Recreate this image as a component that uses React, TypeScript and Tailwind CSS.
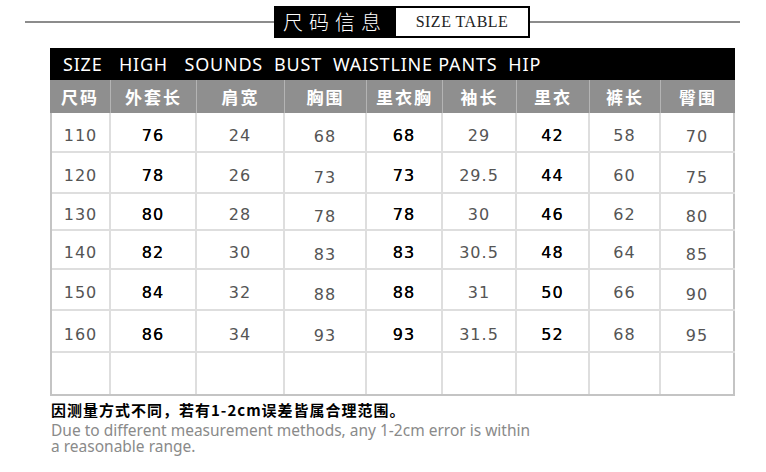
import React from "react";

const cols = [61, 86, 88, 82, 76, 74, 73, 71, 74];
const headers = ["尺码", "外套长", "肩宽", "胸围", "里衣胸", "袖长", "里衣", "裤长", "臀围"];

// true = dark figures, false = grey figures
const darkCols = [false, true, false, false, true, false, true, false, false];
// some columns sit a little lower in the picture
const lowCols = [false, false, false, true, false, false, false, false, true];

const rows = [
  ["110", "76", "24", "68", "68", "29", "42", "58", "70"],
  ["120", "78", "26", "73", "73", "29.5", "44", "60", "75"],
  ["130", "80", "28", "78", "78", "30", "46", "62", "80"],
  ["140", "82", "30", "83", "83", "30.5", "48", "64", "85"],
  ["150", "84", "32", "88", "88", "31", "50", "66", "90"],
  ["160", "86", "34", "93", "93", "31.5", "52", "68", "95"],
  ["", "", "", "", "", "", "", "", ""],
];
const rowHeights = ["h-[40px]", "h-[41px]", "h-[37px]", "h-[39px]", "h-[41px]", "h-[42px]", "h-[43px]"];

const cjk = "font-['Noto_Sans_CJK_SC','Noto_Sans',sans-serif]";

export default function App() {
  return (
    <div className="w-[766px] h-[472px] bg-white overflow-hidden">
      {/* title */}
      <div className="flex items-center pl-[25px] pr-[26px] pt-[6px]">
        <div className="w-[249px] h-[2px] bg-[#8c8c8c]" />
        <div
          className={`w-[122px] h-[32px] bg-black text-white flex items-center justify-center text-[20px] tracking-[6px] font-light ${cjk}`}
        >
          尺码信息
        </div>
        <div className="w-[134px] h-[32px] border-2 border-l-0 border-black flex items-center justify-center text-[16px] text-[#222] tracking-[0.5px] font-['Liberation_Serif',serif]">
          SIZE TABLE
        </div>
        <div className="flex-1 h-[2px] bg-[#8c8c8c]" />
      </div>

      {/* table */}
      <div className="ml-[50px] mt-[10px] w-[685px]">
        <div className="h-[32px] bg-black text-white flex items-center pl-[13px] text-[18px] tracking-[0.8px] whitespace-pre font-['Noto_Sans',sans-serif]">
          {"SIZE   HIGH   SOUNDS  BUST  WAISTLINE PANTS  HIP"}
        </div>
        <div className="grid grid-cols-[61px_86px_88px_82px_76px_74px_73px_71px_74px] h-[33px] bg-[#8f8f8f]">
          {headers.map((h, i) => (
            <div
              key={h}
              className={`flex items-center justify-center text-white text-[17px] font-bold tracking-[2px] ${cjk} ${
                i < cols.length - 1 ? "border-r border-[#b4b4b4]" : ""
              }`}
            >
              {h}
            </div>
          ))}
        </div>
        <div className="border-l-2 border-[#c4c4c4]">
          {rows.map((r, ri) => (
            <div
              key={ri}
              className={`grid grid-cols-[59px_86px_88px_82px_76px_74px_73px_71px_74px] ${rowHeights[ri]} ${
                ri === rows.length - 1 ? "border-b-2 border-[#c4c4c4]" : "border-b-2 border-[#dedede]"
              }`}
            >
              {r.map((v, ci) => (
                <div
                  key={ci}
                  className={`flex items-center justify-center text-[16px] tracking-[1px] font-['DejaVu_Sans',sans-serif] border-r-2 ${
                    ci === cols.length - 1 ? "border-[#c4c4c4]" : "border-[#dedede]"
                  } ${darkCols[ci] ? "text-black [text-shadow:0_0_0.6px_#000]" : "text-[#555]"} ${
                    lowCols[ci] ? "pt-[10px]" : "pt-[7px]"
                  }`}
                >
                  {v}
                </div>
              ))}
            </div>
          ))}
        </div>
      </div>

      {/* notes */}
      <div className="ml-[51px] mt-[5px] flex flex-col gap-[3px]">
        <div className={`text-[15px] font-bold text-black leading-[18px] tracking-[1px] ${cjk}`}>
          因测量方式不同，若有1-2cm误差皆属合理范围。
        </div>
        <div className="text-[15.5px] text-[#8a8a8a] leading-[16px] w-[482px] font-['Noto_Sans',sans-serif]">
          Due to different measurement methods, any 1-2cm error is within a reasonable range.
        </div>
      </div>
    </div>
  );
}
